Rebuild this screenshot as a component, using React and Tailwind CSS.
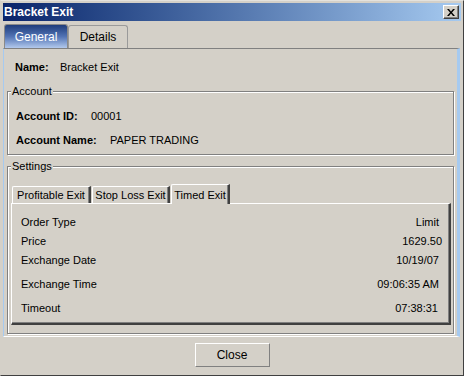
import React from "react";

const rows = [
  { label: "Order Type", value: "Limit", mt: "mt-[11px]", pr: "pr-[10px]" },
  { label: "Price", value: "1629.50", mt: "mt-[5px]", pr: "pr-[7px]" },
  { label: "Exchange Date", value: "10/19/07", mt: "mt-[5px]", pr: "pr-[10px]" },
  { label: "Exchange Time", value: "09:06:35 AM", mt: "mt-[10px]", pr: "pr-[10px]" },
  { label: "Timeout", value: "07:38:31", mt: "mt-[10px]", pr: "pr-[11px]" },
];

function GroupBox({ title, className = "", children }) {
  return (
    <fieldset
      className={`mx-[3px] w-[447px] border border-[#808080] shadow-[inset_1px_1px_0_#fff,1px_1px_0_#fff] ${className}`}
    >
      <legend className="ml-[3px] px-[1px] leading-[13px] bg-[#d4d0c8]">{title}</legend>
      {children}
    </fieldset>
  );
}

function InnerTab({ label, active, width }) {
  return (
    <div
      className={`${width} ${
        active ? "h-[20px] relative z-10 -mb-[1px] pt-[1px]" : "h-[17px]"
      } flex items-center justify-center bg-[#d4d0c8] border-t border-l border-t-white border-l-white border-r-2 border-r-[#404040] shadow-[inset_-1px_0_0_#808080] rounded-tl-[2px]`}
    >
      {label}
    </div>
  );
}

export default function App() {
  return (
    <div className="w-[464px] h-[376px] bg-[#d4d0c8] border border-t-[#e4e2dd] border-l-[#d4d0c8] border-r-[#404040] border-b-[#404040] p-[2px] flex flex-col text-black text-[11px] leading-[14px] font-['Liberation_Sans',Arial,sans-serif]">
      {/* Title bar */}
      <div className="h-[18px] shrink-0 flex items-center justify-between pl-[1px] pr-[2px] bg-gradient-to-r from-[#0a246a] to-[#a6caf0]">
        <span className="text-white font-bold text-[12px]">Bracket Exit</span>
        <button className="w-[16px] h-[14px] flex items-center justify-center bg-[#d4d0c8] border border-t-white border-l-white border-r-[#404040] border-b-[#404040] shadow-[inset_-1px_-1px_0_#808080]">
          <svg width="8" height="7" viewBox="0 0 8 7">
            <path d="M0 0h2l2 2.5L6 0h2L5 3.5 8 7H6L4 4.5 2 7H0l3-3.5z" fill="#000" />
          </svg>
        </button>
      </div>

      {/* Tabs */}
      <div className="mt-[3px] h-[24px] shrink-0 flex items-end pl-[1px] text-[12px]">
        <div className="w-[64px] h-[24px] flex items-center justify-center rounded-t-[3px] border border-b-0 border-[#8a8a8a] bg-gradient-to-b from-[#1f3d7c] via-[#5273b4] to-[#b3c9ec] text-white">
          General
        </div>
        <div className="w-[60px] h-[23px] flex items-center justify-center rounded-t-[3px] border border-b-0 border-[#9a9a9a] bg-[#d4d0c8]">
          Details
        </div>
      </div>

      {/* Panel */}
      <div className="w-[457px] h-[289px] shrink-0 border-t border-t-[#808080] border-l border-l-[#a6caf0] border-r-[3px] border-r-[#a6caf0] border-b border-b-[#ffffff] flex flex-col">
        <div className="pt-[11px] pl-[11px] h-[25px] flex">
          <span className="w-[45px] font-bold">Name:</span>
          <span>Bracket Exit</span>
        </div>

        <GroupBox title="Account" className="mt-[11px] pb-[7px]">
          <div className="flex flex-col pl-[8px] pt-[11px] gap-[10px]">
            <div className="h-[14px] flex">
              <span className="w-[75px] font-bold">Account ID:</span>
              <span>00001</span>
            </div>
            <div className="h-[14px] flex">
              <span className="w-[94px] font-bold">Account Name:</span>
              <span>PAPER TRADING</span>
            </div>
          </div>
        </GroupBox>

        <GroupBox title="Settings" className="mt-[5px] pb-[8px]">
          <div className="mt-[10px] h-[20px] flex items-end pl-[4px] gap-[1px]">
            <InnerTab label="Profitable Exit" width="w-[79px]" />
            <InnerTab label="Stop Loss Exit" width="w-[78px]" />
            <InnerTab label="Timed Exit" width="w-[59px]" active />
          </div>
          <div className="ml-[3px] mr-[2px] h-[122px] border-t border-l border-t-white border-l-white border-r-2 border-b-2 border-r-[#404040] border-b-[#404040] shadow-[inset_-1px_-1px_0_#808080] flex flex-col">
            {rows.map((r) => (
              <div key={r.label} className={`${r.mt} h-[14px] flex justify-between pl-[9px] ${r.pr}`}>
                <span>{r.label}</span>
                <span>{r.value}</span>
              </div>
            ))}
          </div>
        </GroupBox>
      </div>

      {/* Footer */}
      <div className="flex-1 flex items-center justify-center">
        <button className="w-[75px] h-[24px] flex items-center justify-center text-[12px] bg-[#d4d0c8] border border-t-white border-l-white border-r-[#808080] border-b-[#808080]">
          Close
        </button>
      </div>
    </div>
  );
}
